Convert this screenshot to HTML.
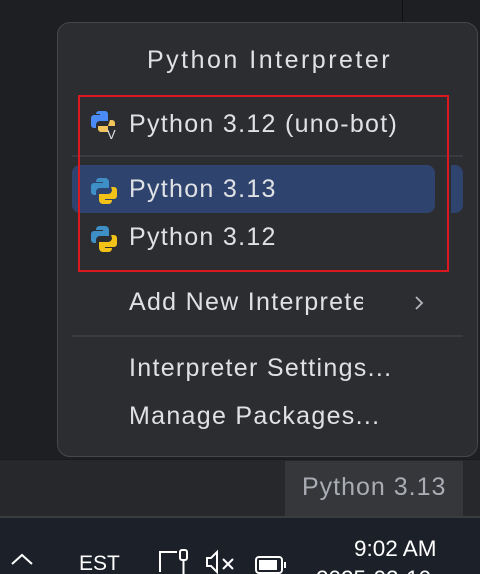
<!DOCTYPE html>
<html><head><style>
*{margin:0;padding:0;box-sizing:border-box}
html,body{width:480px;height:574px;overflow:hidden}
body{background:#1e1f22;font-family:"Liberation Sans",sans-serif;position:relative;color:#dfe1e5}
.a{position:absolute;white-space:nowrap}
.t{font-size:25px;letter-spacing:1.3px}
</style></head><body>
<div class="a" style="left:402px;top:0;width:1px;height:22px;background:#0f1012"></div>
<div class="a" style="left:0;top:459px;width:480px;height:59px;background:#27282c;border-top:1px solid #1a1b1d"></div>
<div class="a" style="left:285px;top:461px;width:178px;height:56px;background:#36373b"></div>
<div class="a t" style="left:302px;top:473px;color:#a9adb3;letter-spacing:1px">Python 3.13</div>
<div class="a" style="left:0;top:516px;width:480px;height:2px;background:#3a3c40"></div>
<div class="a" style="left:0;top:518px;width:480px;height:56px;background:#1c2029;overflow:hidden">
<svg class="a" style="left:10px;top:34px" width="24" height="14"><path d="M2 12l10-9 10 9" stroke="#fff" stroke-width="2" fill="none"/></svg>
<div class="a" style="left:79px;top:34px;font-size:21px;color:#fff">EST</div>
<svg class="a" style="left:155px;top:30px" width="135" height="26" fill="none" stroke="#fff" stroke-width="2">
<path d="M22 4H5v20"/><rect x="25" y="2" width="7" height="10" rx="2"/><path d="M28.5 12v14"/>
<path d="M52 10h4l6-6v20l-6-6h-4z"/><path d="M68 11l10 10M78 11l-10 10"/>
<rect x="101" y="9" width="26" height="16" rx="3"/><rect x="104" y="12" width="18" height="10" fill="#fff" stroke="none"/><path d="M130 14v6"/></svg>
<div class="a" style="left:354px;top:18px;font-size:22.5px;color:#fff">9:02 AM</div>
<div class="a" style="left:316px;top:48px;font-size:22.5px;color:#fff">2025-02-10</div>
</div>
<div class="a" style="left:57px;top:22px;width:421px;height:435px;background:#2b2d30;border:1.5px solid #45474c;border-radius:13px"></div>
<div class="a t" style="left:147px;top:46px;letter-spacing:2.5px">Python Interpreter</div>
<div class="a" style="left:72px;top:155px;width:391px;height:2px;background:#393b40"></div>
<div class="a" style="left:72px;top:335px;width:391px;height:2px;background:#393b40"></div>
<div class="a" style="left:72px;top:165px;width:363px;height:48px;background:#2e436e;border-radius:8px"></div>
<div class="a" style="left:451px;top:165px;width:12px;height:48px;background:#2e436e;border-radius:0 8px 8px 0"></div>
<div class="a" style="left:78px;top:95px;width:371px;height:177px;border:2px solid #d9191f"></div>
<svg class="a" style="left:90px;top:110px" width="30" height="30" viewBox="0 0 30 30">
<path d="M9 1h6a3 3 0 0 1 3 3v7h-8a4 4 0 0 0-4 4v3H4a3 3 0 0 1-3-3V8a3 3 0 0 1 3-3h6V4H6a3 3 0 0 1 3-3z" fill="#4b8bf5"/>
<path d="M20 10h2a3 3 0 0 1 3 3v3h-7v6H11a3 3 0 0 1-3-3v-3h10z" fill="#f2c55c"/>
<text x="17" y="29" font-size="13" fill="#dfe1e5" font-family="Liberation Sans">V</text></svg>
<svg class="a" style="left:90px;top:177px" width="28" height="28" viewBox="0 0 28 28">
<path d="M9 1h6a4 4 0 0 1 4 4v6H10a4 4 0 0 0-4 4v3H4a3 3 0 0 1-3-3V9a3 3 0 0 1 3-3h9V5H6a4 4 0 0 1 3-4z" fill="#3d8fc6"/>
<path d="M21 10h3a3 3 0 0 1 3 3v6a3 3 0 0 1-3 3h-9v1h7a4 4 0 0 1-3 4h-6a4 4 0 0 1-4-4v-6h9a4 4 0 0 0 4-4z" fill="#f2c218"/></svg>
<svg class="a" style="left:90px;top:225px" width="28" height="28" viewBox="0 0 28 28">
<path d="M9 1h6a4 4 0 0 1 4 4v6H10a4 4 0 0 0-4 4v3H4a3 3 0 0 1-3-3V9a3 3 0 0 1 3-3h9V5H6a4 4 0 0 1 3-4z" fill="#3d8fc6"/>
<path d="M21 10h3a3 3 0 0 1 3 3v6a3 3 0 0 1-3 3h-9v1h7a4 4 0 0 1-3 4h-6a4 4 0 0 1-4-4v-6h9a4 4 0 0 0 4-4z" fill="#f2c218"/></svg>
<div class="a t" style="left:129px;top:110px">Python 3.12 (uno-bot)</div>
<div class="a t" style="left:129px;top:175px">Python 3.13</div>
<div class="a t" style="left:129px;top:223px">Python 3.12</div>
<div class="a t" style="left:129px;top:288px;width:234px;overflow:hidden">Add New Interpreter</div>
<svg class="a" style="left:412px;top:295px" width="14" height="16"><path d="M4 2l6 6-6 6" stroke="#b3b6bb" stroke-width="1.8" fill="none"/></svg>
<div class="a t" style="left:129px;top:354px">Interpreter Settings...</div>
<div class="a t" style="left:129px;top:402px">Manage Packages...</div>
</body></html>
